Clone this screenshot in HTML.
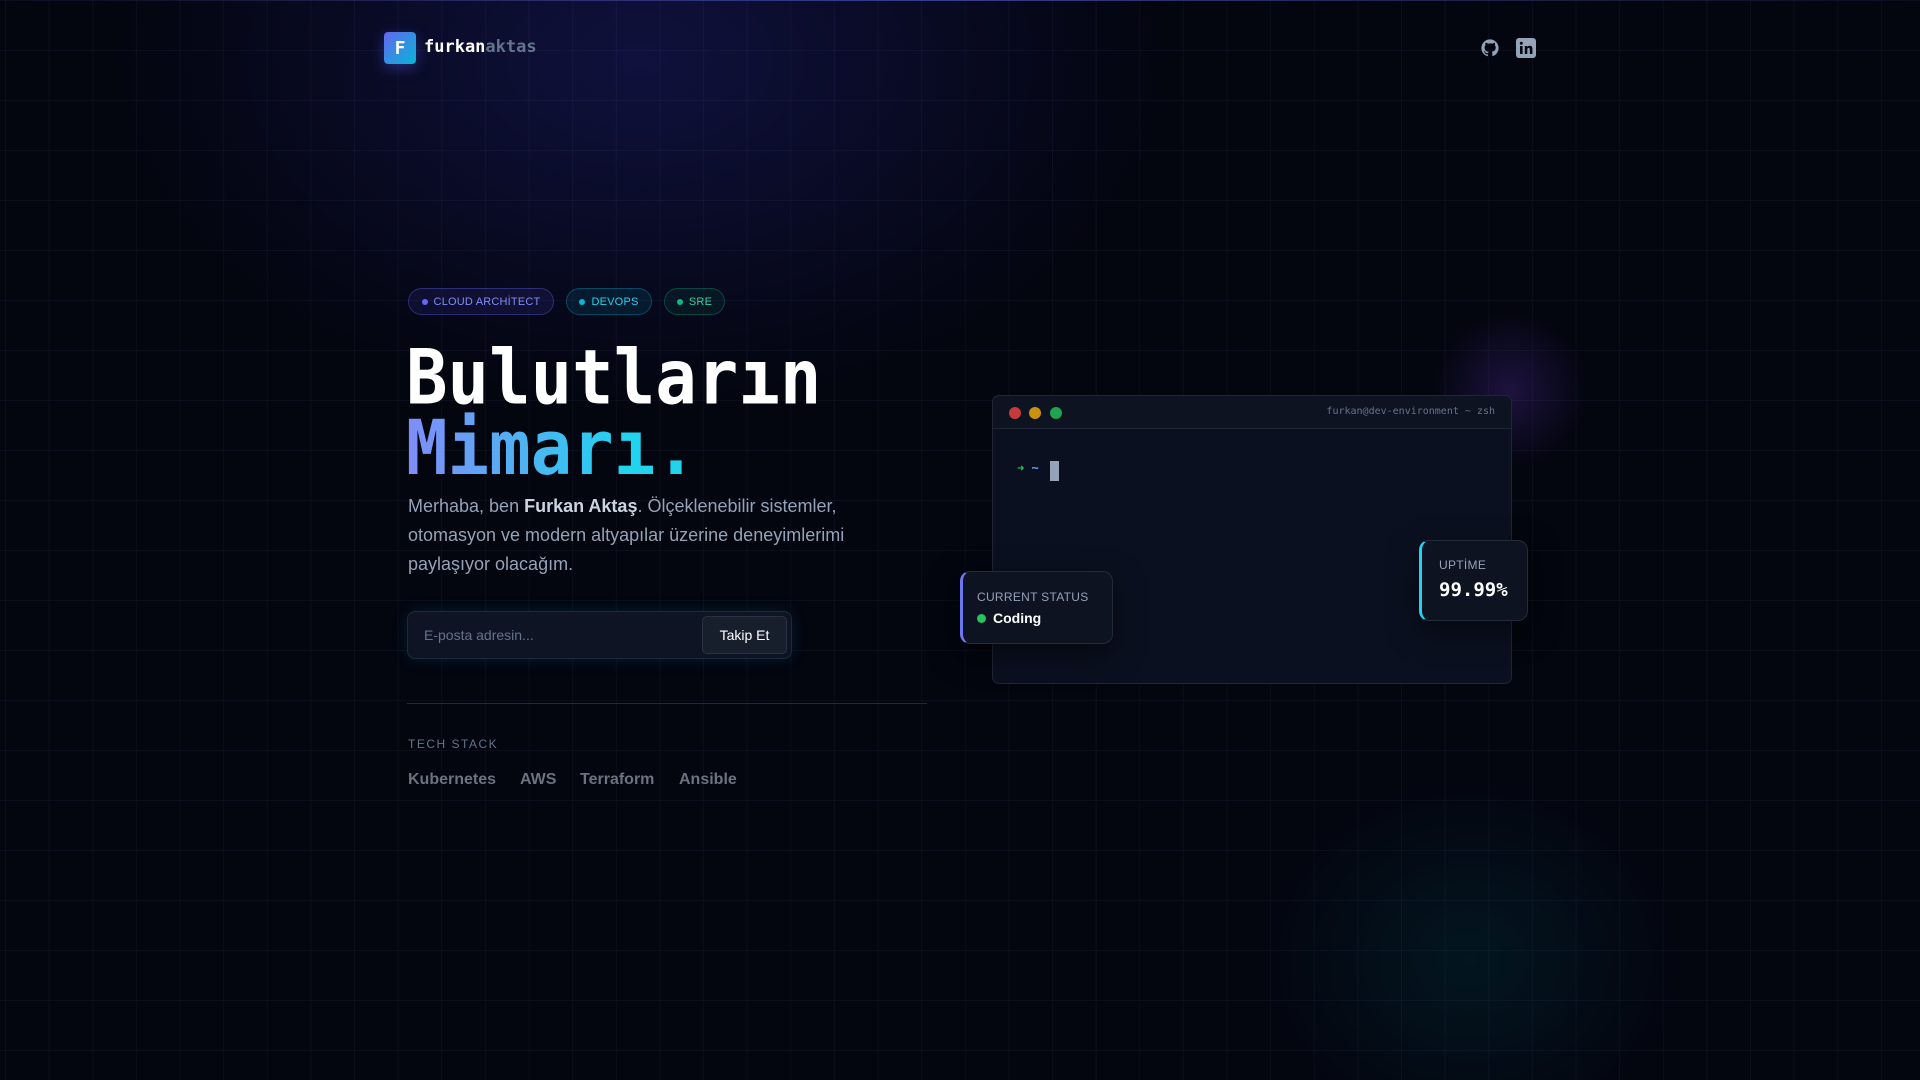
<!DOCTYPE html>
<html><head><meta charset="utf-8"><style>
*{margin:0;padding:0;box-sizing:border-box}
body{width:1920px;height:1080px;overflow:hidden;background:#03050f;font-family:"Liberation Sans",sans-serif;position:relative}
.bg{position:absolute;inset:0;
background:
radial-gradient(ellipse 700px 460px at 640px 60px,rgba(35,35,130,0.4),transparent 75%),
radial-gradient(circle 110px at 1510px 390px,rgba(90,50,170,0.3),transparent 70%),
radial-gradient(ellipse 300px 260px at 1470px 960px,rgba(0,90,100,0.2),transparent 70%),
#03050f;}
.grid{position:absolute;inset:0;background-image:linear-gradient(to right,rgba(80,90,140,0.09) 1px,transparent 1px),linear-gradient(to bottom,rgba(80,90,140,0.09) 1px,transparent 1px);background-size:43.64px 50px;background-position:5px 0}
.topline{position:absolute;top:0;left:0;right:0;height:1px;background:linear-gradient(90deg,transparent,rgba(99,102,241,0.5),transparent)}
.abs{position:absolute}
.mono{font-family:"DejaVu Sans Mono","Liberation Mono",monospace}
.logo{left:384px;top:32px;width:32px;height:32px;border-radius:4px;background:linear-gradient(135deg,#6366f1,#06b6d4);color:#fff;font:bold 18px "DejaVu Sans Mono",monospace;display:flex;align-items:center;justify-content:center;box-shadow:0 4px 14px rgba(80,90,240,0.4)}
.brand{left:424px;top:37px;font:bold 17px "DejaVu Sans Mono",monospace;color:#fff}
.brand span{color:#64748b}
.badge{top:288px;height:27px;border-radius:14px;font-size:11px;display:flex;align-items:center;justify-content:center;white-space:nowrap;letter-spacing:.2px}
.badge i{width:6px;height:6px;border-radius:50%;margin-right:6px;display:inline-block}
h1{position:absolute;left:406px;top:343px;font:bold 69px/64px "DejaVu Sans Mono",monospace;color:#fff;transform:scaleY(1.1);transform-origin:top left;white-space:nowrap}
.grad{background:linear-gradient(90deg,#818cf8,#22d3ee 75%);-webkit-background-clip:text;background-clip:text;color:transparent}
.p{left:408px;top:492px;width:470px;font-size:18px;line-height:29px;color:#94a3b8}
.p b{color:#cbd5e1}
.input{left:407px;top:611px;width:385px;height:48px;border:1px solid #1e293b;border-radius:8px;background:#0e1424;box-shadow:0 0 16px rgba(6,182,212,0.15)}
.input .ph{position:absolute;left:16px;top:15px;font-size:14px;color:#64748b}
.btn{position:absolute;right:4px;top:4px;width:85px;height:38px;border:1px solid #2a3344;border-radius:5px;background:#171e2c;color:#fff;font-size:14px;display:flex;align-items:center;justify-content:center}
.div{left:407px;top:703px;width:520px;height:1px;background:#1e293b}
.ts{left:408px;top:737px;font-size:12px;letter-spacing:1.5px;color:#64748b}
.tech{top:771px;font-size:16px;font-weight:bold;color:#6b7280}
.term{left:992px;top:395px;width:520px;height:289px;border:1px solid #1f2636;border-radius:7px;background:#0b1020}
.th{height:33px;border-bottom:1px solid #1f2636;background:#0e1322;border-radius:7px 7px 0 0;position:relative}
.dot{position:absolute;top:11px;width:12px;height:12px;border-radius:50%}
.card{border:1px solid #232b3b;border-radius:10px;background:#0e1322;box-shadow:0 10px 30px rgba(0,0,0,.5)}
</style></head><body>
<div class="bg"></div><div class="grid"></div><div class="topline"></div>
<div class="abs logo">F</div>
<div class="abs brand">furkan<span>aktas</span></div>
<svg class="abs" style="left:1481px;top:39px" width="18" height="18" viewBox="0 0 24 24"><path fill="#94a3b8" d="M12 .5C5.7.5.5 5.7.5 12c0 5.1 3.3 9.4 7.9 10.9.6.1.8-.2.8-.6v-2c-3.2.7-3.9-1.5-3.9-1.5-.5-1.3-1.3-1.7-1.3-1.7-1-.7.1-.7.1-.7 1.2.1 1.8 1.2 1.8 1.2 1 1.8 2.8 1.3 3.5 1 .1-.8.4-1.3.7-1.6-2.6-.3-5.3-1.3-5.3-5.7 0-1.3.5-2.3 1.2-3.1-.1-.3-.5-1.5.1-3.1 0 0 1-.3 3.3 1.2a11.5 11.5 0 0 1 6 0C17.3 4.7 18.3 5 18.3 5c.6 1.6.2 2.8.1 3.1.8.8 1.2 1.8 1.2 3.1 0 4.4-2.7 5.4-5.3 5.7.4.4.8 1.1.8 2.2v3.2c0 .3.2.7.8.6A11.5 11.5 0 0 0 23.5 12C23.5 5.7 18.3.5 12 .5z"/></svg>
<svg class="abs" style="left:1516px;top:38px" width="20" height="20" viewBox="0 0 20 20"><rect width="20" height="20" rx="3" fill="#94a3b8"/><rect x="4" y="8" width="2.6" height="8" fill="#03050f"/><circle cx="5.3" cy="5.2" r="1.5" fill="#03050f"/><path d="M8.8 8h2.5v1.1c.4-.7 1.3-1.3 2.5-1.3 2 0 2.6 1.2 2.6 3.2V16h-2.6v-4.5c0-1-.3-1.6-1.2-1.6s-1.3.7-1.3 1.6V16H8.8z" fill="#03050f"/></svg>

<div class="abs badge" style="left:408px;width:146px;border:1px solid rgba(99,102,241,.35);background:rgba(79,70,229,.12);color:#818cf8"><i style="background:#6366f1"></i>CLOUD ARCHİTECT</div>
<div class="abs badge" style="left:566px;width:86px;border:1px solid rgba(6,182,212,.3);background:rgba(6,182,212,.1);color:#22d3ee"><i style="background:#06b6d4"></i>DEVOPS</div>
<div class="abs badge" style="left:664px;width:61px;border:1px solid rgba(16,185,129,.3);background:rgba(16,185,129,.08);color:#34d399"><i style="background:#10b981"></i>SRE</div>

<h1>Bulutların<br><span class="grad">Mimarı.</span></h1>
<div class="abs p">Merhaba, ben <b>Furkan Aktaş</b>. Ölçeklenebilir sistemler, otomasyon ve modern altyapılar üzerine deneyimlerimi paylaşıyor olacağım.</div>
<div class="abs input"><span class="ph">E-posta adresin...</span><div class="btn">Takip Et</div></div>
<div class="abs div"></div>
<div class="abs ts">TECH STACK</div>
<div class="abs tech" style="left:408px">Kubernetes</div>
<div class="abs tech" style="left:520px">AWS</div>
<div class="abs tech" style="left:580px">Terraform</div>
<div class="abs tech" style="left:679px">Ansible</div>

<div class="abs term">
<div class="th"><div class="dot" style="left:16px;background:#c53a3a"></div><div class="dot" style="left:36px;background:#c8920f"></div><div class="dot" style="left:57px;background:#1fa34f"></div>
<div class="mono" style="position:absolute;right:16px;top:10px;font-size:10px;color:#64748b">furkan@dev-environment ~ zsh</div></div>
<div class="mono" style="position:absolute;left:24px;top:65px;font-size:12px;font-weight:bold"><span style="color:#22c55e">➜</span> <span style="color:#60a5fa">~</span></div>
<div style="position:absolute;left:57px;top:65px;width:9px;height:20px;background:#94a3b8"></div>
</div>
<div class="abs card" style="left:960px;top:571px;width:153px;height:73px;border-left:3px solid #6d78f0">
<div style="position:absolute;left:14px;top:18px;font-size:12px;color:#94a3b8;letter-spacing:.3px">CURRENT STATUS</div>
<div style="position:absolute;left:14px;top:38px;font-size:14px;font-weight:bold;color:#fff;display:flex;align-items:center"><i style="width:9px;height:9px;border-radius:50%;background:#22c55e;margin-right:7px;display:inline-block"></i>Coding</div>
</div>
<div class="abs card" style="left:1419px;top:540px;width:109px;height:81px;border-left:3px solid #22d3ee">
<div style="position:absolute;left:17px;top:17px;font-size:12px;color:#94a3b8;letter-spacing:.3px">UPTİME</div>
<div class="mono" style="position:absolute;left:17px;top:38px;font-size:19px;font-weight:bold;color:#fff">99.99%</div>
</div>
</body></html>
